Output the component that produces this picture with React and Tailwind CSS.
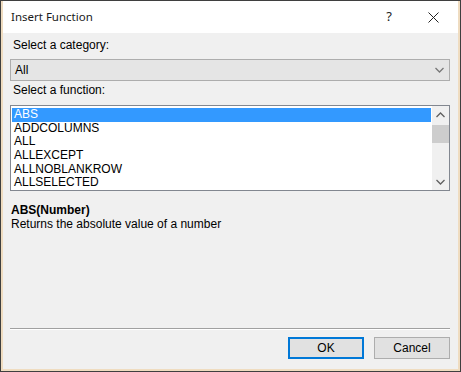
import React from 'react'

const FUNCS = ['ABS', 'ADDCOLUMNS', 'ALL', 'ALLEXCEPT', 'ALLNOBLANKROW', 'ALLSELECTED']

function Chevron({ up, className }) {
  return (
    <svg width="9" height="6" viewBox="0 0 9 6" className={className}>
      <path d={up ? 'M0.5 5 L4.5 1 L8.5 5' : 'M0.5 1 L4.5 5 L8.5 1'} fill="none" stroke="currentColor" strokeWidth="1.3" />
    </svg>
  )
}

export default function App() {
  return (
    <div className="w-[461px] h-[372px] border border-[#3f3f3f] bg-[#f0f0f0] text-[12px] text-black" style={{ fontFamily: '"Liberation Sans", Arial, sans-serif' }}>
      <div className="h-full flex flex-col border-x-2 border-b-2 border-[#efdcc0]">
        {/* title bar */}
        <div className="h-[32px] bg-white flex items-center pl-[8px] shrink-0">
          <span className="flex-1 text-[11.5px] text-[#1a1a1a]" style={{ fontFamily: '"Noto Sans", sans-serif' }}>Insert Function</span>
          <span className="w-[14px] text-center text-[13px] text-[#222] mr-[32px]" style={{ fontFamily: '"Noto Sans", sans-serif' }}>?</span>
          <svg width="11" height="11" viewBox="0 0 11 11" className="mr-[19px]">
            <path d="M0.5 0.5 L10.5 10.5 M10.5 0.5 L0.5 10.5" stroke="#222" strokeWidth="1" />
          </svg>
        </div>

        <div className="flex-1 flex flex-col pl-[7px] pr-[8px]">
          <div className="mt-[5px] leading-[14px] pl-[3px]">Select a category:</div>
          <div className="mt-[7px] h-[22px] border border-[#adadad] bg-[#e5e5e5] flex items-center pl-[4px] pr-[5px]">
            <span className="flex-1">All</span>
            <Chevron className="text-[#777]" />
          </div>
          <div className="mt-[2px] leading-[14px] pl-[3px]">Select a function:</div>

          {/* function list */}
          <div className="mt-[8px] h-[86px] border border-[#828790] bg-white flex">
            <div className="flex-1 pt-[2px] pl-[1px] pr-[1px]">
              {FUNCS.map((f, i) => (
                <div key={f} className={`h-[13.7px] leading-[13px] pl-[2px] ${i === 0 ? 'bg-[#3399ff] text-white' : ''}`}>{f}</div>
              ))}
            </div>
            <div className="w-[17px] bg-[#f0f0f0] flex flex-col items-center">
              <div className="h-[17px] flex items-center justify-center text-[#606060]">
                <Chevron up />
              </div>
              <div className="w-[17px] h-[18px] bg-[#cdcdcd] mt-[2px]" />
              <div className="flex-1" />
              <div className="h-[17px] flex items-center justify-center text-[#606060]">
                <Chevron />
              </div>
            </div>
          </div>

          <div className="mt-[12px] pl-[1px] font-bold leading-[14px]">ABS(Number)</div>
          <div className="pl-[1px] leading-[14px]">Returns the absolute value of a number</div>

          <div className="flex-1" />
          <div className="h-[2px] border-t border-[#a0a0a0] border-b border-b-white" />
          <div className="flex justify-end gap-[10px] mt-[7px] mb-[10px]">
            <button className="w-[76px] h-[22px] border-2 border-[#0078d7] bg-[#e1e1e1] text-[12px]">OK</button>
            <button className="w-[76px] h-[22px] border border-[#adadad] bg-[#e1e1e1] text-[12px]">Cancel</button>
          </div>
        </div>
      </div>
    </div>
  )
}
